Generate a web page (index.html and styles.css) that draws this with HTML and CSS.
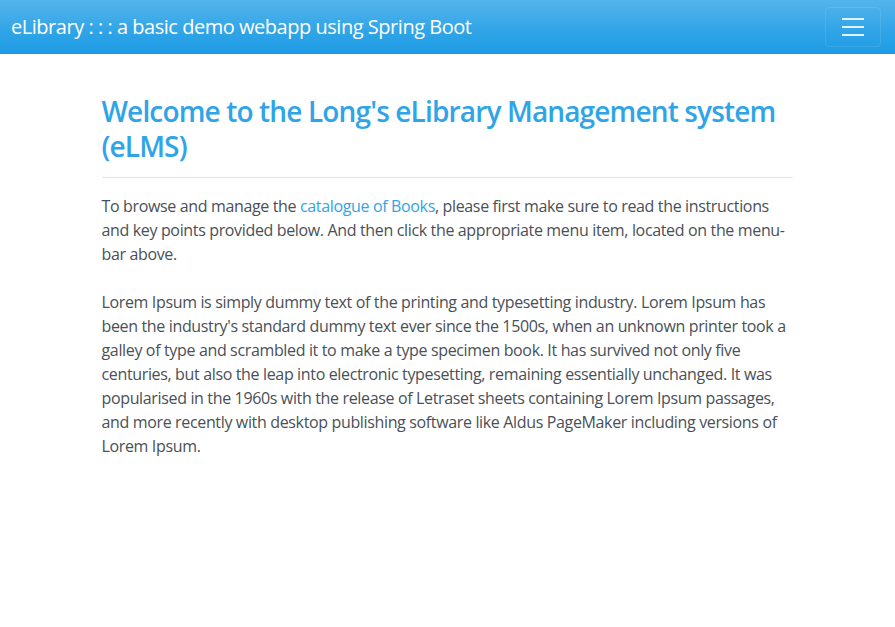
FILE: index.html
```html
<!DOCTYPE html>
<html lang="en">
<head>
<meta charset="utf-8">
<title>eLibrary</title>
<link rel="stylesheet" href="styles.css">
</head>
<body>
<nav class="navbar">
  <a class="brand" href="#">eLibrary : : : a basic demo webapp using Spring Boot</a>
  <button class="toggler" type="button" aria-label="Toggle navigation">
    <svg width="30" height="30" viewBox="0 0 30 30"><path d="M4 7h22M4 15h22M4 23h22" stroke="rgba(255,255,255,0.85)" stroke-width="2" stroke-linecap="butt" fill="none"/></svg>
  </button>
</nav>
<main class="container">
  <h1 class="title">Welcome to the Long's eLibrary Management system (eLMS)</h1>
  <hr class="rule">
  <p>To browse and manage the <a href="#">catalogue of Books</a>, please first make sure to read the instructions and key points provided below. And then click the appropriate menu item, located on the menu-bar above.</p>
  <p>Lorem Ipsum is simply dummy text of the printing and typesetting industry. Lorem Ipsum has been the industry's standard dummy text ever since the 1500s, when an unknown printer took a galley of type and scrambled it to make a type specimen book. It has survived not only five centuries, but also the leap into electronic typesetting, remaining essentially unchanged. It was popularised in the 1960s with the release of Letraset sheets containing Lorem Ipsum passages, and more recently with desktop publishing software like Aldus PageMaker including versions of Lorem Ipsum.</p>
</main>
</body>
</html>
```
FILE: styles.css
```css
* { box-sizing: border-box; }
html, body { margin: 0; padding: 0; }
body {
  font-family: "Open Sans", "Noto Sans", sans-serif;
  font-size: 16px;
  line-height: 24px;
  color: #495057;
  background: #fff;
  letter-spacing: -0.35px;
}
.navbar {
  height: 54px;
  display: flex;
  align-items: center;
  justify-content: space-between;
  padding: 0 14px 0 11px;
  background-image: linear-gradient(#54b4eb, #2fa4e7 60%, #1d9ce5);
}
.brand {
  color: #fff;
  text-decoration: none;
  font-size: 20px;
  line-height: 30px;
  letter-spacing: -0.47px;
}
.toggler {
  width: 56px;
  height: 40px;
  margin-top: -1px;
  border: 1px solid rgba(255,255,255,0.1);
  border-radius: 4px;
  background: transparent;
  display: flex;
  align-items: center;
  justify-content: center;
  padding: 0;
}
.container {
  width: 720px;
  margin: 0 auto;
  padding: 40px 15px 0 14px;
}
.title {
  margin: 0;
  font-size: 28px;
  line-height: 35px;
  font-weight: 600;
  letter-spacing: -0.85px;
  color: #2fa4e7;
}
.rule {
  margin: 13px 0 16px;
  border: 0;
  border-top: 1px solid rgba(0,0,0,0.1);
}
p { margin: 0 0 24px; }
a { color: #2fa4e7; text-decoration: none; }
```
